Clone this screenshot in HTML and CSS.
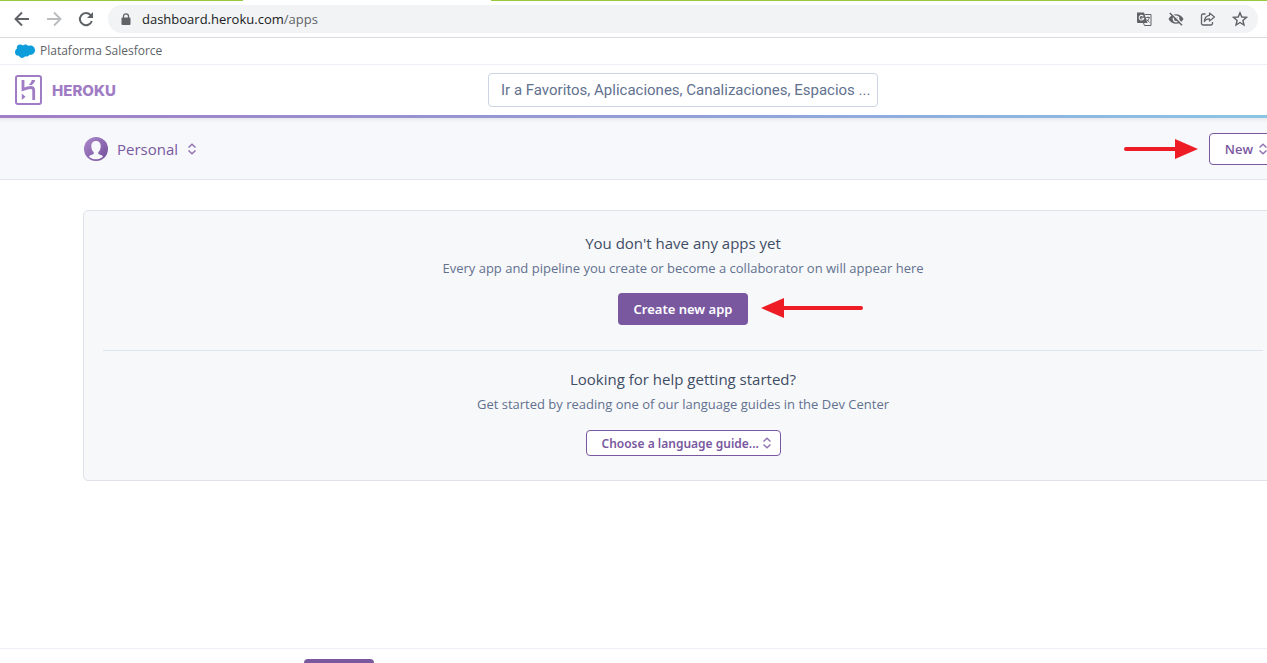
FILE: index.html
```html
<!DOCTYPE html>
<html lang="en">
<head>
<meta charset="utf-8">
<meta name="viewport" content="width=device-width, initial-scale=1">
<title>Personal apps | Heroku</title>
<link rel="stylesheet" href="styles.css">
</head>
<body>
<svg class="sprite" aria-hidden="true">
  <symbol id="sort" viewBox="0 0 10 12"><path d="M1.500 4.500L5 1.300L8.500 4.500M1.500 7.500L5 10.700L8.500 7.500" fill="none" stroke="currentColor" stroke-width="1.500"/></symbol>
</svg>
<div class="browser">
  <div class="tab-strip"><span class="active-tab"></span></div>
  <div class="toolbar">
    <button class="nav-button" aria-label="Back"><svg width="16" height="16" viewBox="0 0 16 16"><path d="M15 8H2M8 1.500L1.500 8L8 14.500" fill="none" stroke="currentColor" stroke-width="1.900"/></svg></button>
    <button class="nav-button nav-disabled" aria-label="Forward"><svg width="16" height="16" viewBox="0 0 16 16"><path d="M1 8H14M8 1.500L14.500 8L8 14.500" fill="none" stroke="currentColor" stroke-width="1.900"/></svg></button>
    <button class="nav-button" aria-label="Reload"><svg width="16" height="16" viewBox="0 0 16 16"><path d="M13.800 10A6.100 6.100 0 1 1 12.600 4.100" fill="none" stroke="currentColor" stroke-width="2"/><path d="M15 1V7H9z" fill="currentColor"/></svg></button>
    <div class="address">
      <svg class="lock" width="10" height="12" viewBox="0 0 10 12"><path d="M2.500 5V3.300a2.500 2.500 0 0 1 5 0V5" fill="none" stroke="currentColor" stroke-width="1.300"/><rect x="0.500" y="4.500" width="9" height="7.500" rx="1" fill="currentColor"/></svg>
      <span class="url"><span class="host">dashboard.heroku.com</span>/apps</span>
      <div class="address-actions">
        <button class="nav-button" aria-label="Translate"><svg width="16" height="16" viewBox="0 0 16 16"><path d="M1 1.500h7l3.500 10.500H2a1 1 0 0 1-1-1z" fill="currentColor"/><path d="M8.800 3.500H15v11H8.500L7.500 12" fill="none" stroke="currentColor" stroke-width="1"/><path d="M7.300 5.300a2.300 2.300 0 1 0 .4 2H5.300" fill="none" stroke="#f1f3f4" stroke-width="1.100"/><path d="M9.500 6.500h4.500M12 5.500v1M13.300 6.500c-.5 2-1.500 3.200-3 4.500M11 8.500l2.500 3" fill="none" stroke="currentColor" stroke-width=".9"/></svg></button>
        <button class="nav-button" aria-label="Third-party cookies blocked"><svg width="16" height="16" viewBox="0 0 16 16"><path d="M.5 8C3.500 1.700 12.500 1.700 15.500 8C12.500 14.300 3.500 14.300.5 8z" fill="currentColor"/><circle cx="8" cy="8" r="2.700" fill="currentColor" stroke="#f1f3f4" stroke-width="1.400"/><path d="M3 1.500L15 13.500" stroke="#f1f3f4" stroke-width="1.500"/><path d="M1.800 2L14 14.200" stroke="currentColor" stroke-width="1.500"/></svg></button>
        <button class="nav-button" aria-label="Share"><svg width="16" height="16" viewBox="0 0 16 16"><path d="M5.500 3H3a1.500 1.500 0 0 0-1.500 1.500v8A1.500 1.500 0 0 0 3 14h8a1.500 1.500 0 0 0 1.500-1.500V11" fill="none" stroke="currentColor" stroke-width="1.300"/><path d="M9.500 2L14.500 6L9.500 10V7.800C7 7.800 5.500 8.500 4.300 10.500C4.600 7 6.500 4.800 9.500 4.300z" fill="none" stroke="currentColor" stroke-width="1.200" stroke-linejoin="round"/></svg></button>
        <button class="nav-button" aria-label="Bookmark this page"><svg width="16" height="16" viewBox="0 0 16 16"><path d="M8 1.700L9.800 6L14.500 6.400L10.900 9.400L12 14L8 11.500L4 14L5.100 9.400L1.500 6.400L6.200 6z" fill="none" stroke="currentColor" stroke-width="1.400"/></svg></button>
      </div>
    </div>
  </div>
  <nav class="bookmarks" aria-label="Bookmarks">
    <a class="bookmark" href="#"><svg width="20" height="14" viewBox="0 0 20 14"><path d="M2 4.500C1 1 5-.8 8 1.500C10 0 12 .3 13.200 2C17 .4 20 3 20 6.300C20 9.500 17.500 11.300 14.500 10.800C13.500 12.500 11.500 13 10 12.200C8.500 14.600 5 14.400 4 11.800C1.500 12.200 0 10.300 0 8.300C0 6.800.7 5.500 2 4.500z" fill="#0d9dda"/></svg>Plataforma Salesforce</a>
  </nav>
</div>
<div class="page">
  <header class="site-header">
    <a class="brand" href="#">
      <svg width="27" height="30" viewBox="0 0 27 30"><rect x="1" y="1" width="25" height="28" rx="2" fill="none" stroke="#9f7cc4" stroke-width="2"/><path d="M8 5v9.500C11 13.300 13.500 12.500 15.800 12.500C17.800 12.500 18.700 13.500 18.700 15.500V25" fill="none" stroke="#9f7cc4" stroke-width="2.800"/><path d="M20.200 5C19.700 7 18.600 8.500 17 10h-3.200C15.500 8.300 16.400 6.700 16.800 5zM6.800 18.500l3.700 3.300L6.800 25z" fill="#9f7cc4"/></svg>
      <span>HEROKU</span>
    </a>
    <input class="search" type="text" aria-label="Jump to" placeholder="Ir a Favoritos, Aplicaciones, Canalizaciones, Espacios ...">
  </header>
  <div class="rainbow"></div>
  <div class="context-bar">
    <button class="account">
      <svg width="24" height="24" viewBox="0 0 24 24"><defs><linearGradient id="avatar" x1="0" y1="0" x2="1" y2="1"><stop offset="0" stop-color="#ad8acb"/><stop offset="1" stop-color="#704c99"/></linearGradient></defs><circle cx="12" cy="12" r="12" fill="url(#avatar)"/><path d="M12 4C8.800 4 7.300 6.200 7.300 9.200C7.300 11.800 8.300 14 9.700 15.100V17C8 17.800 6.200 18 4.900 19.400C8.800 23.300 15.200 23.300 19.100 19.400C17.800 18 16 17.800 14.300 17V15.100C15.700 14 16.700 11.800 16.700 9.200C16.700 6.200 15.200 4 12 4z" fill="#f7f8fb"/></svg>
      <span>Personal</span>
      <svg class="sort" width="10" height="12"><use href="#sort"/></svg>
    </button>
    <div class="create">
      <svg width="74" height="20" viewBox="0 0 74 20"><path d="M2 10H52" stroke="#ee1c25" stroke-width="4" stroke-linecap="round"/><path d="M51 0L74 10L51 20z" fill="#ee1c25"/></svg>
      <button class="new-button">New <svg class="sort" width="10" height="12"><use href="#sort"/></svg></button>
    </div>
  </div>
  <main class="panel">
    <section class="block">
      <h2>You don't have any apps yet</h2>
      <p>Every app and pipeline you create or become a collaborator on will appear here</p>
      <div class="create-row">
        <button class="primary">Create new app</button>
        <svg class="pointer" width="102" height="20" viewBox="0 0 102 20"><path d="M22 10H100" stroke="#ee1c25" stroke-width="4" stroke-linecap="round"/><path d="M23 0L0 10L23 20z" fill="#ee1c25"/></svg>
      </div>
    </section>
    <section class="block help">
      <h2>Looking for help getting started?</h2>
      <p><label for="guide">Get started by reading one of our language guides in the Dev Center</label></p>
      <div class="guide-picker">
        <select id="guide"><option>Choose a language guide...</option></select>
        <svg class="sort" width="10" height="12"><use href="#sort"/></svg>
      </div>
    </section>
  </main>
  <footer class="bottom-bar"><button class="bottom-button" aria-label="Accept"></button></footer>
</div>
</body>
</html>
```
FILE: styles.css
```css
* { box-sizing: border-box; }
html { overflow: hidden; }
body {
  margin: 0;
  height: 100vh;
  display: flex;
  flex-direction: column;
  overflow: hidden;
  background: #fff;
  font-family: "Open Sans", sans-serif;
  font-size: 13px;
  color: #5f6368;
}
button, input, select { font: inherit; color: inherit; margin: 0; }
button { padding: 0; border: 0; background: none; cursor: pointer; }
a { color: inherit; text-decoration: none; }
svg { display: block; flex: none; }
.sprite { position: absolute; width: 0; height: 0; }

.tab-strip { height: 1px; background: #98ca3f; display: flex; }
.active-tab { width: 248px; margin-left: 243px; background: #fff; }
.toolbar {
  height: 37px;
  display: flex;
  align-items: center;
  gap: 16px;
  padding: 0 9px 0 14px;
  border-bottom: 1px solid #d9dbde;
}
.nav-button { color: #5f6368; }
.nav-disabled { color: #babcbe; }
.address {
  flex: 1;
  height: 28px;
  display: flex;
  align-items: center;
  gap: 11px;
  margin-left: -2px;
  padding: 0 10px 0 13px;
  border-radius: 14px;
  background: #f1f3f4;
}
.url { flex: 1; }
.host { color: #202124; }
.address-actions { display: flex; gap: 16px; }
.bookmarks {
  height: 27px;
  display: flex;
  align-items: center;
  padding-left: 15px;
  border-bottom: 1px solid #eceff7;
}
.bookmark { display: flex; align-items: center; gap: 5px; font-size: 12px; line-height: 16px; }

.page {
  flex: 1;
  display: flex;
  flex-direction: column;
  margin-right: -99px;
}
.site-header {
  height: 50px;
  display: grid;
  grid-template-columns: 1fr 390px 1fr;
  align-items: center;
  padding: 0 15px;
}
.brand {
  display: flex;
  align-items: center;
  gap: 10px;
  color: #9f7cc4;
  font: 800 15px Inter, sans-serif;
}
.search {
  height: 34px;
  padding: 0 4px 0 12px;
  border: 1px solid #cbd5e3;
  border-radius: 4px;
  background: #fff;
  font-family: Roboto, sans-serif;
  font-size: 15px;
}
.search::placeholder { color: #62718f; opacity: 1; }
.rainbow { height: 3px; background: linear-gradient(90deg, #a17dc4, #8fa8dc 60%, #8bcbe5); }
.context-bar {
  height: 62px;
  display: flex;
  align-items: center;
  justify-content: space-between;
  padding: 0 83px 0 84px;
  border-bottom: 1px solid #e3e6f0;
  background: linear-gradient(#e9eaef, #f7f8fb 5px);
}
.account { display: flex; align-items: center; gap: 9px; color: #79589f; font-size: 15px; line-height: 20px; }
.sort { color: #9173b2; }
.create { display: flex; align-items: center; gap: 11px; }
.new-button {
  height: 32px;
  display: flex;
  align-items: center;
  gap: 5px;
  padding: 0 14px 0 15px;
  border: 1px solid #79589f;
  border-radius: 4px;
  background: #fff;
  color: #79589f;
  font-weight: 600;
}
.panel {
  margin: 30px 83px 0;
  padding: 0 19px 24px;
  border: 1px solid #dfe2e8;
  border-radius: 5px;
  background: #f7f8fa;
  text-align: center;
}
.block {
  display: flex;
  flex-direction: column;
  align-items: center;
  padding: 21px 0 25px;
}
.help { padding: 17px 0 0; border-top: 1px solid #dfe5f0; }
h2 { margin: 0; font-size: 15px; line-height: 22px; font-weight: 400; color: #3f4d65; }
p { margin: 5px 0 16px; font-size: 13px; line-height: 18px; color: #62718f; }
.help p { margin-bottom: 17px; }
.create-row { position: relative; }
.primary {
  height: 32px;
  padding: 0 16px;
  border-radius: 4px;
  background: #79589f;
  color: #fff;
  font-family: "Noto Sans", sans-serif;
  font-weight: 600;
}
.pointer { position: absolute; left: calc(100% + 13px); top: 5px; }
.guide-picker { position: relative; color: #79589f; }
.guide-picker select {
  height: 26px;
  padding: 0 20px 0 15px;
  border: 1px solid #79589f;
  border-radius: 4px;
  background: #fff;
  appearance: none;
  font-family: "Noto Sans", sans-serif;
  font-size: 12px;
  font-weight: 600;
}
.guide-picker .sort { position: absolute; right: 9px; top: 7px; pointer-events: none; }
.bottom-bar { height: 15px; margin-top: auto; padding: 10px 0 0 304px; border-top: 1px solid #eff0f7; overflow: hidden; }
.bottom-button { display: block; width: 70px; height: 32px; border-radius: 4px; background: #79589f; }
```
